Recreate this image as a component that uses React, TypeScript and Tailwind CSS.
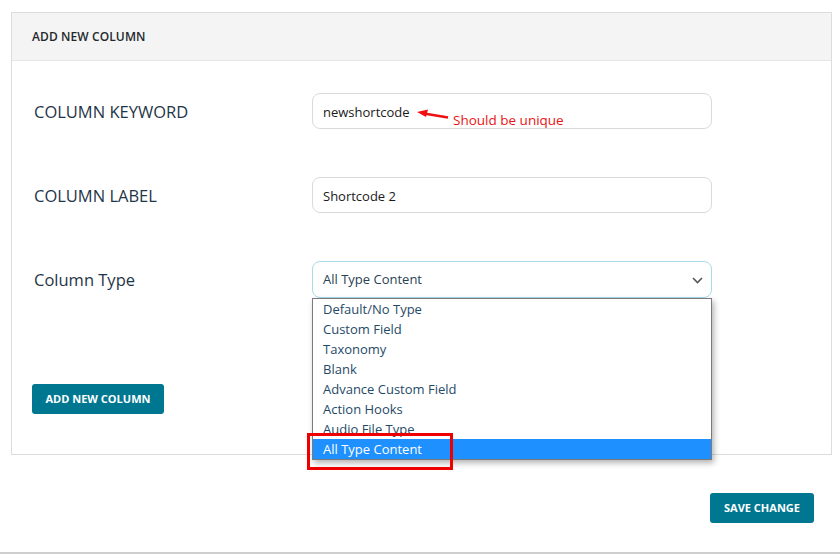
import React from "react";

const items = [
  "Default/No Type",
  "Custom Field",
  "Taxonomy",
  "Blank",
  "Advance Custom Field",
  "Action Hooks",
  "Audio File Type",
  "All Type Content",
];

export default function App() {
  return (
    <div
      className="w-[840px] h-[554px] bg-white flex flex-col overflow-hidden relative"
      style={{ fontFamily: '"Open Sans", "Noto Sans", sans-serif' }}
    >
      <div className="pt-[12px] pl-[11px]">
        <div className="w-[821px] border border-[#dcdcdc] bg-white">
          <div className="h-[48px] bg-[#f4f4f4] border-b border-[#e6e6e6] flex items-center pl-[20px]">
            <span className="text-[12px] font-semibold text-[#23282d] tracking-[0.1px]">ADD NEW COLUMN</span>
          </div>
          <div className="pl-[22px] pt-[32px] pb-[40px]">
            <div className="flex items-center h-[36px]">
              <div className="w-[278px] pt-[3px] text-[16.5px] text-[#1f3548]">COLUMN KEYWORD</div>
              <div className="relative w-[400px] h-[36px] border border-[#dadada] rounded-[8px] flex items-center pl-[10px]">
                <span className="pt-[3px] text-[13px] text-[#1a1a1a]">newshortcode</span>
                <svg className="absolute left-[103px] top-[15px]" width="34" height="12" viewBox="0 0 34 12">
                  <line x1="8" y1="4.5" x2="32" y2="8.5" stroke="#ee1111" strokeWidth="2.4" />
                  <polygon points="1,3 12,0.5 10,8" fill="#ee1111" />
                </svg>
                <span className="absolute left-[140px] top-[20px] text-[13.5px] text-[#e81414] leading-none">Should be unique</span>
              </div>
            </div>
            <div className="flex items-center h-[36px] mt-[48px]">
              <div className="w-[278px] pt-[3px] text-[16.5px] text-[#1f3548]">COLUMN LABEL</div>
              <div className="w-[400px] h-[36px] border border-[#dadada] rounded-[8px] flex items-center pl-[10px]">
                <span className="pt-[3px] text-[13px] text-[#1a1a1a]">Shortcode 2</span>
              </div>
            </div>
            <div className="flex items-center h-[36px] mt-[48px]">
              <div className="w-[278px] pt-[3px] text-[16.5px] text-[#1f3548]">Column Type</div>
              <div className="relative w-[400px] h-[37px] border border-[#a9dbe9] rounded-[8px] flex items-center pl-[10px]">
                <span className="pt-[2px] text-[13px] text-[#2a4256]">All Type Content</span>
                <svg className="absolute right-[8px] top-[15px]" width="11" height="7" viewBox="0 0 11 7">
                  <path d="M1 1 L5.5 5.5 L10 1" fill="none" stroke="#555" strokeWidth="1.6" />
                </svg>
                <div className="absolute left-[-1px] top-[36px] w-[400px] bg-white border border-[#7a7a7a] shadow-[2px_3px_6px_rgba(0,0,0,0.3)] z-10">
                  {items.map((it, i) => (
                    <div
                      key={it}
                      className={
                        i === items.length - 1
                          ? "h-[20px] leading-[20px] pl-[10px] text-[13px] bg-[#1e90ff] text-white"
                          : "h-[20px] leading-[20px] pl-[10px] text-[13px] text-[#1f4a68]"
                      }
                    >
                      {it}
                    </div>
                  ))}
                </div>
                <div className="absolute left-[-6px] top-[171px] w-[146px] h-[37px] border-[3px] border-[#ee0000] z-20" />
              </div>
            </div>
            <div className="mt-[87px] ml-[-2px]">
              <button className="h-[30px] w-[132px] bg-[#007791] rounded-[3px] text-white text-[11px] font-bold flex items-center justify-center">
                ADD NEW COLUMN
              </button>
            </div>
          </div>
        </div>
      </div>
      <div className="flex justify-end pr-[26px] mt-[38px]">
        <button className="h-[30px] w-[104px] bg-[#007791] rounded-[3px] text-white text-[11px] font-bold flex items-center justify-center">
          SAVE CHANGE
        </button>
      </div>
      <div className="absolute left-0 bottom-0 w-full h-[2px] bg-[#cfcfcf]" />
    </div>
  );
}
